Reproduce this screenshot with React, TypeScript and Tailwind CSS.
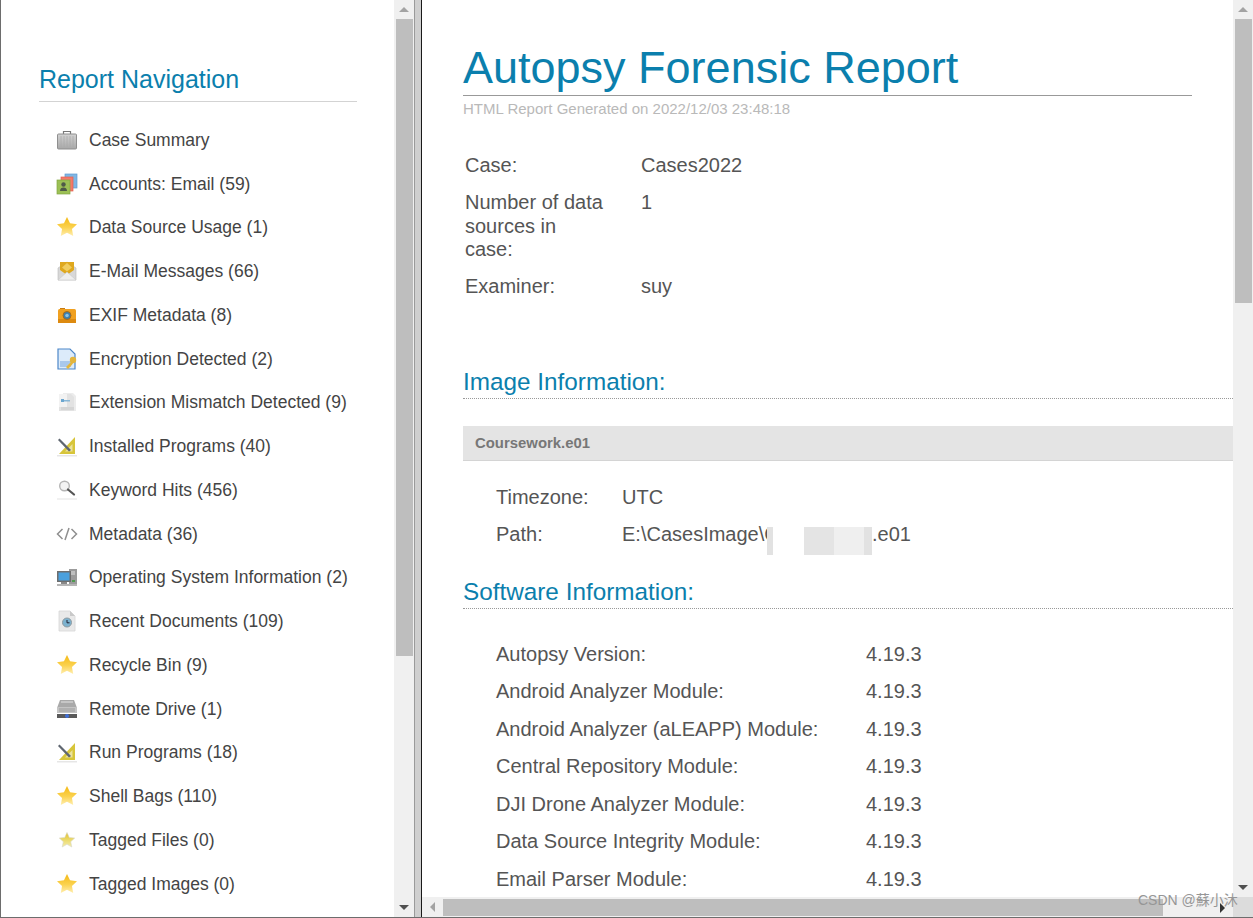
import React from "react";

const Star = ({ small }: { small?: boolean }) => (
  <svg width="22" height="22" viewBox="0 0 22 22">
    <defs>
      <linearGradient id={small ? "sg2" : "sg1"} x1="0" y1="0" x2="0" y2="1">
        <stop offset="0" stopColor={small ? "#e2c02e" : "#f4b915"} />
        <stop offset="0.55" stopColor={small ? "#ecdc70" : "#fbd24e"} />
        <stop offset="1" stopColor={small ? "#f3ecb0" : "#ffeeb0"} />
      </linearGradient>
    </defs>
    {small ? (
      <path d="M11 3.5l2.3 5 5.4.6-4 3.6 1.1 5.3-4.8-2.7-4.8 2.7 1.1-5.3-4-3.6 5.4-.6z" fill="url(#sg2)" stroke="#d8d8c8" strokeWidth=".6" />
    ) : (
      <path d="M11 1L14.060 7.300 21 8.300 15.950 13.100 17.200 20 11 16.700 4.800 20 6.050 13.100 1 8.300 7.940 7.300z" fill="url(#sg1)" />
    )}
  </svg>
);

const Case = () => (
  <svg width="22" height="22" viewBox="0 0 22 22">
    <defs>
      <linearGradient id="cg" x1="0" y1="0" x2="0" y2="1">
        <stop offset="0" stopColor="#d2d2d2" />
        <stop offset="1" stopColor="#a8a8a8" />
      </linearGradient>
    </defs>
    <path d="M7.5 5V2.500h7V5" fill="none" stroke="#777" strokeWidth="1.2" />
    <rect x="1.500" y="5" width="19" height="15" rx="1" fill="url(#cg)" stroke="#8f8f8f" />
    <path d="M5 7v11M8 7v11M11 7v11M14 7v11M17 7v11" stroke="#a8a8a8" strokeOpacity=".7" />
  </svg>
);

const Accounts = () => (
  <svg width="22" height="22" viewBox="0 0 22 22">
    <rect x="9" y="1" width="12" height="14" fill="#7fb6e4" stroke="#5f9ad0" strokeWidth=".7" />
    <rect x="5" y="4" width="12" height="14" fill="#f47a6b" stroke="#e2604f" strokeWidth=".7" />
    <rect x="1" y="7" width="13" height="14" fill="#9cc055" stroke="#82a63f" strokeWidth=".7" />
    <circle cx="7.5" cy="11.5" r="2.2" fill="#4e5a48" />
    <path d="M4 18c0-2.6 1.6-3.6 3.5-3.6S11 15.400 11 18z" fill="#4e5a48" />
  </svg>
);

const Mail = () => (
  <svg width="22" height="22" viewBox="0 0 22 22">
    <path d="M2 8l9-6 9 6v12H2z" fill="#d8d8d8" stroke="#bbb" strokeWidth=".6" />
    <path d="M4 2h14v8l-7 5-7-5z" fill="#dfa81e" />
    <path d="M11 3l5 4.500-5 4-5-4z" fill="#f1cd5f" />
    <path d="M2 20l9-8 9 8z" fill="#eeeeee" stroke="#c9c9c9" strokeWidth=".6" />
  </svg>
);

const Camera = () => (
  <svg width="22" height="22" viewBox="0 0 22 22">
    <path d="M4 4h5v2H4z" fill="#c97b10" />
    <rect x="2" y="5" width="18" height="14" rx="1.500" fill="#f0a020" />
    <rect x="2" y="15" width="18" height="4" fill="#dd8a10" />
    <circle cx="11" cy="11.500" r="4" fill="#3d7fb0" stroke="#b06a10" />
    <circle cx="11" cy="11.500" r="1.800" fill="#8cc3e6" />
  </svg>
);

const Encrypted = () => (
  <svg width="22" height="22" viewBox="0 0 22 22">
    <path d="M2 1h12l5 5v15H2z" fill="#dcebfa" stroke="#4d87c9" strokeWidth="1.200" />
    <path d="M4 13h11v6H4z" fill="#a9c8ec" />
    <circle cx="17" cy="12" r="3.200" fill="#e3b53d" />
    <path d="M15.500 13.500l-5.500 5.500 2 2 1.500-1.500 1-1 2.500-3" fill="#e3b53d" />
  </svg>
);

const Mismatch = () => (
  <svg width="22" height="22" viewBox="0 0 22 22">
    <path d="M7 2h10l3 3v15H7z" fill="#ececec" />
    <path d="M3 3h12l3 3v14H3z" fill="#e2e2e2" />
    <path d="M3 3h8v13H3z" fill="#f2f2f2" />
    <rect x="5" y="8" width="3" height="3" fill="#6ba6cf" />
    <rect x="8" y="9" width="6" height="1.500" fill="#88b6d6" />
    <rect x="5" y="16" width="13" height="3" fill="#d5d5d5" />
  </svg>
);

const Square = () => (
  <svg width="22" height="22" viewBox="0 0 22 22">
    <path d="M1 20h20v1.500H1z" fill="#e6e6e6" />
    <path d="M19 2v17H3z" fill="#d7c53a" />
    <path d="M16.500 9v7.500H9z" fill="#fff" fillOpacity=".5" />
    <path d="M2 5l1.500-1.500L15 15l-2 1.500z" fill="#5f6670" />
  </svg>
);

const Search = () => (
  <svg width="22" height="22" viewBox="0 0 22 22">
    <circle cx="8.500" cy="7" r="4.800" fill="#f3f3f3" stroke="#b4b4b4" strokeWidth="1.400" />
    <path d="M12 10.500l6 5" stroke="#555" strokeWidth="2.200" strokeLinecap="round" />
    <path d="M1 20h20" stroke="#ececec" strokeWidth="1.500" />
  </svg>
);

const Code = () => (
  <svg width="22" height="22" viewBox="0 0 22 22" fill="none" stroke="#8f8f8f" strokeWidth="1.500">
    <path d="M6.500 6L1.500 11l5 5M15.500 6l5 5-5 5M13 5l-4 12" />
  </svg>
);

const Computer = () => (
  <svg width="22" height="22" viewBox="0 0 22 22">
    <rect x="13" y="3" width="8" height="15" fill="#9b9b9b" />
    <path d="M15 6h4M15 8h4" stroke="#e4e4e4" />
    <rect x="16" y="14" width="3" height="2" fill="#4f9a4f" />
    <rect x="1" y="5" width="14" height="11" fill="#6e6e6e" />
    <rect x="2.500" y="6.500" width="11" height="8" fill="#4aa0dd" />
    <rect x="5" y="16" width="6" height="2" fill="#888" />
    <rect x="1" y="18" width="20" height="2" fill="#b5b5b5" />
  </svg>
);

const Recent = () => (
  <svg width="22" height="22" viewBox="0 0 22 22">
    <path d="M3 1h11l5 5v15H3z" fill="#e9e9e9" stroke="#d6d6d6" strokeWidth=".8" />
    <path d="M14 1l5 5h-5z" fill="#c9c9c9" />
    <circle cx="11" cy="12.500" r="4.500" fill="#7cb2cf" stroke="#8f9aa0" />
    <path d="M11 10v2.800h2.500" fill="none" stroke="#223" strokeWidth="1" />
  </svg>
);

const Drive = () => (
  <svg width="22" height="22" viewBox="0 0 22 22">
    <path d="M4 2h14l3 8H1z" fill="#a9a9a9" />
    <path d="M5 4h12" stroke="#d0d0d0" strokeWidth="1.500" />
    <rect x="1" y="9" width="20" height="6" fill="#c4c4c4" />
    <path d="M3 11h16M3 13h16" stroke="#8d8d8d" strokeWidth=".7" />
    <rect x="1" y="16" width="20" height="4" fill="#5a5a5a" />
    <circle cx="11" cy="18" r="2" fill="#3f6fd8" />
  </svg>
);

const items: [string, React.ReactNode][] = [
  ["Case Summary", <Case />],
  ["Accounts: Email (59)", <Accounts />],
  ["Data Source Usage (1)", <Star />],
  ["E-Mail Messages (66)", <Mail />],
  ["EXIF Metadata (8)", <Camera />],
  ["Encryption Detected (2)", <Encrypted />],
  ["Extension Mismatch Detected (9)", <Mismatch />],
  ["Installed Programs (40)", <Square />],
  ["Keyword Hits (456)", <Search />],
  ["Metadata (36)", <Code />],
  ["Operating System Information (2)", <Computer />],
  ["Recent Documents (109)", <Recent />],
  ["Recycle Bin (9)", <Star />],
  ["Remote Drive (1)", <Drive />],
  ["Run Programs (18)", <Square />],
  ["Shell Bags (110)", <Star />],
  ["Tagged Files (0)", <Star small />],
  ["Tagged Images (0)", <Star />],
];

const modules = [
  "Autopsy Version:",
  "Android Analyzer Module:",
  "Android Analyzer (aLEAPP) Module:",
  "Central Repository Module:",
  "DJI Drone Analyzer Module:",
  "Data Source Integrity Module:",
  "Email Parser Module:",
];

const VScroll = ({ thumb }: { thumb: string }) => (
  <div className="flex h-full w-5 shrink-0 flex-col items-center bg-[#f0f0f0]">
    <div className="flex h-[19px] w-full items-center justify-center">
      <div className="h-0 w-0 border-x-[5px] border-b-[5px] border-x-transparent border-b-[#a3a3a3]" />
    </div>
    <div className={`w-[17px] bg-[#bebebe] ${thumb}`} />
    <div className="flex-1" />
    <div className="flex h-[19px] w-full items-center justify-center">
      <div className="h-0 w-0 border-x-[5px] border-t-[5px] border-x-transparent border-t-[#505050]" />
    </div>
  </div>
);

export default function App() {
  return (
    <div className="relative flex h-[918px] w-[1253px] overflow-hidden border-b border-l border-[#6d6d6d] bg-white font-['Liberation_Sans',Arial,sans-serif]">
      <aside className="flex h-full w-[393px] shrink-0 flex-col overflow-hidden pl-[38px] pt-[63px]">
        <h2 className="h-[39px] w-[318px] border-b border-[#d3d3d3] text-[25px] leading-[33px] text-[#0b7fad]">Report Navigation</h2>
        <ul className="mt-[16px] flex flex-col pl-[17px]">
          {items.map(([label, icon]) => (
            <li key={label} className="flex h-[43.750px] items-center gap-[11px] whitespace-nowrap text-[17.500px] text-[#444444]">
              <span className="flex h-[22px] w-[22px] shrink-0 items-center justify-center">{icon}</span>
              <span className="pt-[0.400px]">{label}</span>
            </li>
          ))}
        </ul>
      </aside>
      <VScroll thumb="h-[637px]" />
      <div className="h-full w-[7px] shrink-0 border-l border-[#9a9a9a] bg-[#cfcfcf]" />
      <div className="h-full w-px shrink-0 bg-[#1a1a1a]" />
      <div className="flex h-full min-w-0 flex-1 flex-col">
        <main className="min-h-0 flex-1 overflow-hidden pl-[41px] text-[20px] text-[#555555]">
          <h1 className="mt-[40px] h-[56px] w-[729px] border-b border-[#999999] text-[45px] leading-[55px] text-[#0b7fad]">Autopsy Forensic Report</h1>
          <p className="mt-[3px] h-[20px] text-[15px] leading-[20px] text-[#b9b9b9]">HTML Report Generated on 2022/12/03 23:48:18</p>
          <div className="mt-[35px] flex flex-col pl-[2px] leading-[23.500px]">
            <div className="flex h-[37px]"><span className="w-[176px]">Case:</span><span>Cases2022</span></div>
            <div className="flex h-[84px]"><span className="w-[176px] pr-[36px]">Number of data sources in case:</span><span>1</span></div>
            <div className="flex"><span className="w-[176px]">Examiner:</span><span>suy</span></div>
          </div>
          <h3 className="mt-[68px] h-[32px] border-b border-dotted border-[#999999] text-[24.300px] leading-[30px] text-[#0b7fad]">Image Information:</h3>
          <div className="mt-[27.500px] flex h-[35px] items-center border-b border-[#d4d4d4] bg-[#e4e4e4] pl-[12px] pt-[1px] text-[14.900px] font-bold text-[#777777]">Coursework.e01</div>
          <div className="mt-[17.500px] flex flex-col pl-[33px]">
            <div className="flex h-[37px] items-center"><span className="w-[126px]">Timezone:</span><span>UTC</span></div>
            <div className="flex h-[37.500px] items-center">
              <span className="w-[126px]">Path:</span>
              <span className="flex items-center">
                <span className="w-[145px] whitespace-nowrap">E:\CasesImage\C</span>
                <span className="mt-[14px] h-[28px] w-[6px] self-start bg-[#e2e2e2]" />
                <span className="h-[28px] w-[31px] self-start bg-white" />
                <span className="mt-[14px] h-[28px] w-[30px] self-start bg-[#e4e4e4]" />
                <span className="mt-[14px] h-[28px] w-[30px] self-start bg-[#efefef]" />
                <span className="mt-[14px] h-[28px] w-[8px] self-start bg-[#e2e2e2]" />
                <span>.e01</span>
              </span>
            </div>
          </div>
          <h3 className="mt-[23.500px] h-[32px] border-b border-dotted border-[#999999] text-[24.300px] leading-[30px] text-[#0b7fad]">Software Information:</h3>
          <div className="mt-[26.700px] flex flex-col pl-[33px]">
            {modules.map((m) => (
              <div key={m} className="flex h-[37.500px] shrink-0 items-center"><span className="w-[370px]">{m}</span><span>4.19.3</span></div>
            ))}
          </div>
        </main>
        <div className="flex h-5 shrink-0 items-center bg-[#f0f0f0]">
          <div className="flex w-[21px] justify-center">
            <div className="h-0 w-0 border-y-[5px] border-r-[5px] border-y-transparent border-r-[#a3a3a3]" />
          </div>
          <div className="h-[17px] w-[720px] bg-[#bebebe]" />
        </div>
      </div>
      <div className="flex h-full w-5 shrink-0 flex-col">
        <div className="min-h-0 flex-1"><VScroll thumb="h-[284px]" /></div>
        <div className="h-5 shrink-0 bg-[#dcdcdc]" />
      </div>
      <div className="pointer-events-none absolute left-[1137px] top-[890px] whitespace-nowrap font-['Liberation_Sans','Noto_Sans_CJK_SC',sans-serif] text-[14px] leading-[20px] text-[#969696]">
        CSDN @蘇小沐
      </div>
      <div className="pointer-events-none absolute left-[1219px] top-[903px] h-0 w-0 border-y-[5px] border-l-[5px] border-y-transparent border-l-[#333333]" />
    </div>
  );
}
